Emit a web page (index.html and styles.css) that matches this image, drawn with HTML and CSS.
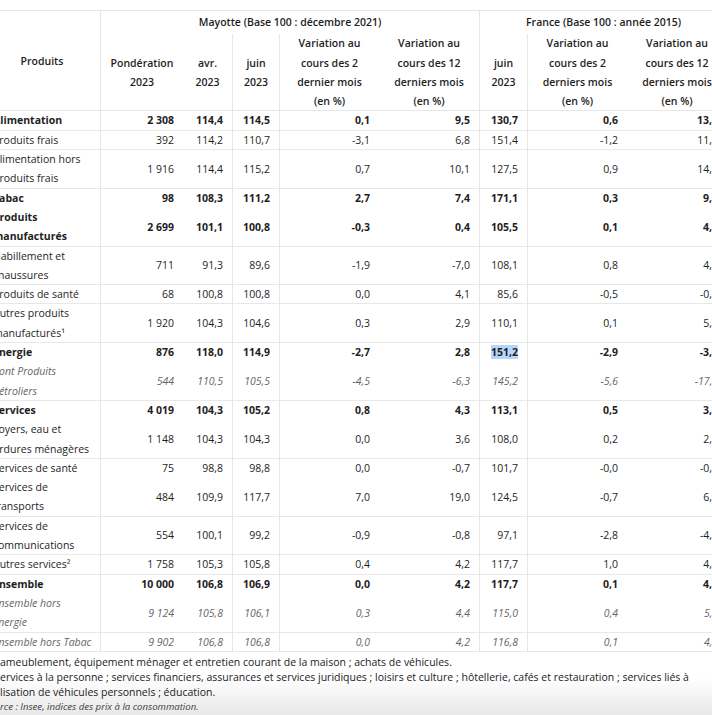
FILE: index.html
```html
<!DOCTYPE html>
<html lang="fr">
<head>
<meta charset="utf-8">
<title>Indices des prix à la consommation – Mayotte / France</title>
<link rel="stylesheet" href="styles.css">
</head>
<body>
<div class="page">
  <div class="scroll">
    <table class="ipc">
      <colgroup>
        <col class="c-prod"><col class="c-pond"><col class="c-avr"><col class="c-juin"><col class="c-var"><col class="c-var"><col class="c-fjuin"><col class="c-fvar2"><col class="c-var">
      </colgroup>
      <thead>
        <tr class="head1">
          <th rowspan="2" class="prod hb">Produits</th>
          <th colspan="5" class="bl">Mayotte (Base 100 : décembre 2021)</th>
          <th colspan="3" class="bl">France (Base 100 : année 2015)</th>
        </tr>
        <tr class="head2">
          <th class="bl hb">Pondération<br>2023</th>
          <th class="hb">avr.<br>2023</th>
          <th class="bl hb">juin<br>2023</th>
          <th class="bl hb">Variation au<br>cours des 2<br>dernier mois<br>(en %)</th>
          <th class="hb">Variation au<br>cours des 12<br>derniers mois<br>(en %)</th>
          <th class="bl hb">juin<br>2023</th>
          <th class="bl hb">Variation au<br>cours des 2<br>derniers mois<br>(en %)</th>
          <th class="hb">Variation au<br>cours des 12<br>derniers mois<br>(en %)</th>
        </tr>
      </thead>
      <tbody>
        <tr class="b sep"><td class="lbl">Alimentation</td><td class="bl">2&nbsp;308</td><td>114,4</td><td class="bl">114,5</td><td class="bl">0,1</td><td>9,5</td><td class="bl">130,7</td><td class="bl">0,6</td><td>13,4</td></tr>
        <tr class="sep"><td class="lbl">Produits frais</td><td class="bl">392</td><td>114,2</td><td class="bl">110,7</td><td class="bl">-3,1</td><td>6,8</td><td class="bl">151,4</td><td class="bl">-1,2</td><td>11,1</td></tr>
        <tr class="sep"><td class="lbl">Alimentation hors<br>produits frais</td><td class="bl">1&nbsp;916</td><td>114,4</td><td class="bl">115,2</td><td class="bl">0,7</td><td>10,1</td><td class="bl">127,5</td><td class="bl">0,9</td><td>14,1</td></tr>
        <tr class="b"><td class="lbl">Tabac</td><td class="bl">98</td><td>108,3</td><td class="bl">111,2</td><td class="bl">2,7</td><td>7,4</td><td class="bl">171,1</td><td class="bl">0,3</td><td>9,2</td></tr>
        <tr class="b sep"><td class="lbl">Produits<br>manufacturés</td><td class="bl">2&nbsp;699</td><td>101,1</td><td class="bl">100,8</td><td class="bl">-0,3</td><td>0,4</td><td class="bl">105,5</td><td class="bl">0,1</td><td>4,2</td></tr>
        <tr class="sep"><td class="lbl">Habillement et<br>chaussures</td><td class="bl">711</td><td>91,3</td><td class="bl">89,6</td><td class="bl">-1,9</td><td>-7,0</td><td class="bl">108,1</td><td class="bl">0,8</td><td>4,1</td></tr>
        <tr class="sep"><td class="lbl">Produits de santé</td><td class="bl">68</td><td>100,8</td><td class="bl">100,8</td><td class="bl">0,0</td><td>4,1</td><td class="bl">85,6</td><td class="bl">-0,5</td><td>-0,3</td></tr>
        <tr class="sep"><td class="lbl">Autres produits<br>manufacturés¹</td><td class="bl">1&nbsp;920</td><td>104,3</td><td class="bl">104,6</td><td class="bl">0,3</td><td>2,9</td><td class="bl">110,1</td><td class="bl">0,1</td><td>5,2</td></tr>
        <tr class="b"><td class="lbl">Énergie</td><td class="bl">876</td><td>118,0</td><td class="bl">114,9</td><td class="bl">-2,7</td><td>2,8</td><td class="bl"><span class="hl">151,2</span></td><td class="bl">-2,9</td><td>-3,6</td></tr>
        <tr class="i sep"><td class="lbl">dont Produits<br>pétroliers</td><td class="bl">544</td><td>110,5</td><td class="bl">105,5</td><td class="bl">-4,5</td><td>-6,3</td><td class="bl">145,2</td><td class="bl">-5,6</td><td>-17,1</td></tr>
        <tr class="b"><td class="lbl">Services</td><td class="bl">4&nbsp;019</td><td>104,3</td><td class="bl">105,2</td><td class="bl">0,8</td><td>4,3</td><td class="bl">113,1</td><td class="bl">0,5</td><td>3,1</td></tr>
        <tr class="sep"><td class="lbl">Loyers, eau et<br>ordures ménagères</td><td class="bl">1&nbsp;148</td><td>104,3</td><td class="bl">104,3</td><td class="bl">0,0</td><td>3,6</td><td class="bl">108,0</td><td class="bl">0,2</td><td>2,6</td></tr>
        <tr><td class="lbl">Services de santé</td><td class="bl">75</td><td>98,8</td><td class="bl">98,8</td><td class="bl">0,0</td><td>-0,7</td><td class="bl">101,7</td><td class="bl">-0,0</td><td>-0,4</td></tr>
        <tr class="sep"><td class="lbl">Services de<br>transports</td><td class="bl">484</td><td>109,9</td><td class="bl">117,7</td><td class="bl">7,0</td><td>19,0</td><td class="bl">124,5</td><td class="bl">-0,7</td><td>6,1</td></tr>
        <tr class="sep"><td class="lbl">Services de<br>communications</td><td class="bl">554</td><td>100,1</td><td class="bl">99,2</td><td class="bl">-0,9</td><td>-0,8</td><td class="bl">97,1</td><td class="bl">-2,8</td><td>-4,2</td></tr>
        <tr class="sep"><td class="lbl">Autres services²</td><td class="bl">1&nbsp;758</td><td>105,3</td><td class="bl">105,8</td><td class="bl">0,4</td><td>4,2</td><td class="bl">117,7</td><td class="bl">1,0</td><td>4,5</td></tr>
        <tr class="b"><td class="lbl">Ensemble</td><td class="bl">10&nbsp;000</td><td>106,8</td><td class="bl">106,9</td><td class="bl">0,0</td><td>4,2</td><td class="bl">117,7</td><td class="bl">0,1</td><td>4,5</td></tr>
        <tr class="i sep"><td class="lbl">Ensemble hors<br>énergie</td><td class="bl">9&nbsp;124</td><td>105,8</td><td class="bl">106,1</td><td class="bl">0,3</td><td>4,4</td><td class="bl">115,0</td><td class="bl">0,4</td><td>5,3</td></tr>
        <tr class="i sep"><td class="lbl">Ensemble hors Tabac</td><td class="bl">9&nbsp;902</td><td>106,8</td><td class="bl">106,8</td><td class="bl">0,0</td><td>4,2</td><td class="bl">116,8</td><td class="bl">0,1</td><td>4,5</td></tr>
      </tbody>
    </table>
  </div>
  <div class="notes">
    <div class="note">ameublement, équipement ménager et entretien courant de la maison ; achats de véhicules.</div>
    <div class="note">ervices à la personne ; services financiers, assurances et services juridiques ; loisirs et culture ; hôtellerie, cafés et restauration ; services liés à</div>
    <div class="note">lisation de véhicules personnels ; éducation.</div>
    <div class="src">rce : Insee, indices des prix à la consommation.</div>
  </div>
  <div class="fade"></div>
</div>
</body>
</html>
```

FILE: styles.css
```css
html, body {
  margin: 0;
  padding: 0;
}

body {
  font-family: "Open Sans", "DejaVu Sans", sans-serif;
  color: #1e1e1e;
  background: #fff;
}

.page {
  position: relative;
  height: 715px;
  overflow: hidden;
}

.scroll {
  overflow: hidden;
  padding-top: 10px;
}

.ipc {
  margin-left: -16px;
  width: 743px;
  table-layout: fixed;
  border-collapse: separate;
  border-spacing: 0;
  border-top: 1px solid #e6e6e6;
  font-size: 10.5px;
  line-height: 19.3px;
}

.c-prod { width: 116px; }
.c-pond { width: 83px; }
.c-avr { width: 49px; }
.c-juin { width: 47px; }
.c-var { width: 100px; }
.c-fjuin { width: 48px; }
.c-fvar2 { width: 100px; }

th {
  font-weight: 600;
  text-align: center;
  vertical-align: middle;
  padding: 0 9px;
  white-space: nowrap;
}

.head1 th {
  padding: 2px 9px;
}

.head1 th.prod {
  padding: 0 9px;
}

td {
  padding: 0 9px;
  text-align: right;
  vertical-align: middle;
  white-space: nowrap;
}

td.lbl {
  text-align: left;
}

.bl {
  border-left: 1px solid #e6e6e6;
}

.hb {
  box-shadow: inset 0 -1px 0 #e6e6e6;
}

.sep td {
  box-shadow: inset 0 -1px 0 #e8e8e8;
}

.b td {
  font-weight: 700;
}

.i td {
  font-style: italic;
  font-weight: 400;
  color: #666;
}

.hl {
  background: #b4d6fd;
}

.notes {
  padding-top: 3px;
  font-size: 10.5px;
  line-height: 15px;
  color: #222;
}

.src {
  font-style: italic;
  font-size: 9.6px;
  line-height: 13px;
  color: #444;
}

.fade {
  position: absolute;
  left: 0;
  right: 0;
  bottom: 0;
  height: 38px;
  background: linear-gradient(rgba(0, 0, 0, 0), rgba(0, 0, 0, 0.09));
  pointer-events: none;
}
```
